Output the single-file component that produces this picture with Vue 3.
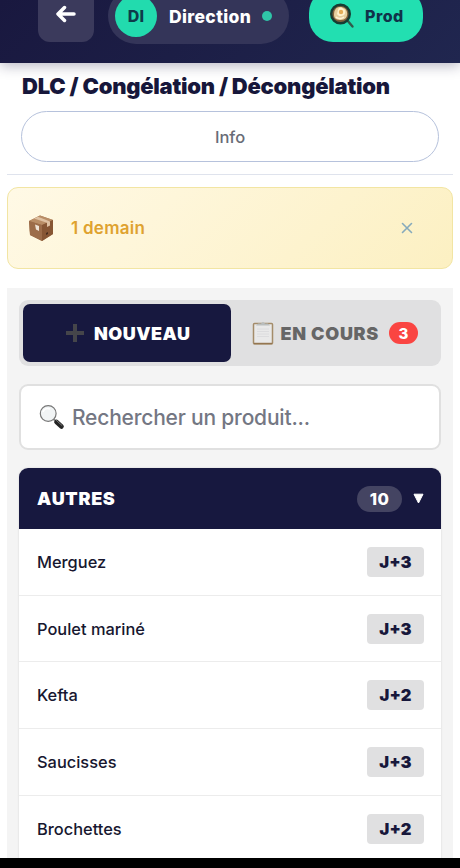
<script setup>
const products = [
  { name: 'Merguez', delay: 'J+3' },
  { name: 'Poulet mariné', delay: 'J+3' },
  { name: 'Kefta', delay: 'J+2' },
  { name: 'Saucisses', delay: 'J+3' },
  { name: 'Brochettes', delay: 'J+2' },
]
</script>

<template>
  <div class="screen">
    <header class="topbar">
      <button class="back" aria-label="Retour">
        <svg width="20" height="18" viewBox="0 0 20 18"><path d="M18 9H2.500M8.500 2.500 2 9l6.500 6.500" fill="none" stroke="#fff" stroke-width="3.500" stroke-linecap="round" stroke-linejoin="round" /></svg>
      </button>
      <div class="user">
        <span class="avatar">DI</span>
        <span class="user-name">Direction</span>
        <i class="dot"></i>
      </div>
      <button class="prod">
        <svg width="26" height="26" viewBox="0 0 26 26">
          <path d="m18 17 5.500 6.500" stroke="#315b4b" stroke-width="2.400" stroke-linecap="round" />
          <circle cx="11.500" cy="11" r="9.300" fill="#80603c" stroke="#173c33" stroke-width="2.400" />
          <path d="M5 12c0-4 1-7 5-8 4 0 7 1 8 5 1 5-2 8-6 8s-7-1-7-5z" fill="#e7cf9e" />
          <path d="M9 7c1-3 4-3 5-1 3 0 3 4 1 6-3 2-6 1-7-1z" fill="#fff2ce" />
          <circle cx="12" cy="9" r="2.200" fill="#e5ad58" />
          <path d="M7 14c2 2 6 2 8 0" stroke="#fff4d8" stroke-width="1.500" fill="none" />
        </svg>
        <span>Prod</span>
      </button>
    </header>

    <section class="heading">
      <h1>DLC / Congélation / Décongélation</h1>
      <button class="info">Info</button>
    </section>

    <div class="alert">
      <svg width="26" height="28" viewBox="0 0 26 28">
        <path d="M1 7 12 1.500 25 6v14l-11 7L2 21z" fill="#a17350" />
        <path d="m1 7 11-5.500L25 6 14 11z" fill="#b98d66" />
        <path d="m1 7 13 4v16L2 21z" fill="#9c6c49" />
        <path d="m25 6-11 5v16l11-7z" fill="#875634" />
        <path d="m6 4.500 13 4.300V13l3-1.400V7.500L10 2.700z" fill="#dfc1a2" />
        <path d="m7 10.500 4 1.500v5l-3-1.500z" fill="#eee2d5" />
        <path d="m18 19 2-1v2l-2 1z" fill="#482c1d" />
      </svg>
      <span class="alert-text">1 demain</span>
      <button class="close" aria-label="Fermer">
        <svg width="12" height="12" viewBox="0 0 12 12"><path d="m1.500 1.500 9 9m0-9-9 9" stroke="#86aabc" stroke-width="1.600" stroke-linecap="round" /></svg>
      </button>
    </div>

    <main class="panel">
      <nav class="tabs">
        <button class="tab active">
          <svg width="18" height="18" viewBox="0 0 18 18"><path d="M9 0v18M0 9h18" stroke="#45454a" stroke-width="4" /></svg>
          <span>NOUVEAU</span>
        </button>
        <button class="tab">
          <svg width="22" height="24" viewBox="0 0 22 24">
            <rect x="1.500" y="2.500" width="19" height="20.500" rx="1" fill="#e9e9e9" stroke="#a48c6a" stroke-width="1.500" />
            <path d="M5 8h12M5 10.500h12M5 13h12M5 15.500h12" stroke="#d8d8da" stroke-width=".8" />
            <path d="M4 4.500 6 2.500h3L11 .8l2 1.700h3l2 2z" fill="#b9bdbd" />
            <path d="M2 22.300h18" stroke="#8c6b43" stroke-width="1" />
          </svg>
          <span>EN COURS</span>
          <b class="badge">3</b>
        </button>
      </nav>

      <div class="search">
        <svg width="26" height="26" viewBox="0 0 26 26">
          <path d="m14.500 15 3 3" stroke="#888" stroke-width="2" />
          <path d="m17.500 18 5 4.500" stroke="#252525" stroke-width="4.600" stroke-linecap="round" />
          <path d="m17.500 16.500 5.500 5" stroke="#777" stroke-width="1" stroke-linecap="round" />
          <circle cx="9.200" cy="9.500" r="7.900" fill="#f1f4f5" stroke="#777" stroke-width="1.200" />
          <path d="M4 8c1-3 4-4 7-3" stroke="#fff" stroke-width="1.600" fill="none" />
        </svg>
        <span>Rechercher un produit...</span>
      </div>

      <section class="card">
        <div class="card-head">
          <h2>AUTRES</h2>
          <span class="count">10</span>
          <svg width="11" height="11" viewBox="0 0 11 11"><path d="M1 1.200h9L5.500 10z" fill="#fff" stroke="#fff" stroke-linejoin="round" /></svg>
        </div>
        <ul>
          <li v-for="p in products" :key="p.name">
            <span>{{ p.name }}</span>
            <b class="delay">{{ p.delay }}</b>
          </li>
        </ul>
      </section>
    </main>
    <footer class="system-bar"></footer>
  </div>
</template>

<style>
body { margin: 0; background: #fff; }
</style>

<style scoped>
* { box-sizing: border-box; }
.screen {
  display: flex; flex-direction: column;
  width: 460px; height: 868px; overflow: hidden;
  font-family: Inter, "Liberation Sans", sans-serif;
  color: #17173b; background: #fff;
}
button { font: inherit; color: inherit; border: 0; padding: 0; background: none; }
h1, h2, ul { margin: 0; padding: 0; }
svg { display: block; flex: none; }
span { white-space: nowrap; }

.topbar {
  display: flex; align-items: flex-end; flex: none;
  height: 63px; padding: 0 37px 21px 38px;
  background: linear-gradient(135deg, #19183f, #20264f);
  box-shadow: 0 3px 12px rgba(25, 24, 63, .3);
}
.back {
  display: flex; justify-content: center; align-items: center;
  width: 56px; height: 57px; border-radius: 12px; background: #3b3a5c;
}
.user {
  display: flex; align-items: center;
  width: 181px; height: 56px; margin: 0 20px -2px 14px; padding-left: 7px;
  border-radius: 28px; background: #343559;
}
.avatar {
  display: flex; justify-content: center; align-items: center; flex: none;
  width: 42px; height: 42px; border-radius: 50%;
  background: #22dbae; color: #0e3b4a; font-size: 16px; font-weight: 800; letter-spacing: .3px;
}
.user-name { width: 83px; margin-left: 12px; color: #fff; font-size: 17.500px; font-weight: 800; letter-spacing: .35px; }
.dot { width: 10px; height: 10px; margin-left: 10px; border-radius: 50%; background: #2fc5a8; }
.prod {
  display: flex; align-items: center;
  width: 114px; height: 53px; padding-left: 20px; border-radius: 24px;
  background: #22dfb1; color: #10334a; font-size: 16px; font-weight: 800; letter-spacing: .5px;
}
.prod span { margin-left: 10px; }

.heading { flex: none; height: 112px; margin: 0 7px; padding: 9px 14px 0; border-bottom: 1px solid #dfe3ed; }
h1 { height: 28px; font-size: 22px; line-height: 28px; font-weight: 900; letter-spacing: -.25px; white-space: nowrap; padding-left: 1px; }
.info {
  display: block; width: 418px; height: 51px; margin-top: 11px;
  border: 1px solid #b6c2dc; border-radius: 26px;
  color: #686b76; font-size: 16.500px; font-weight: 500;
}

.alert {
  display: flex; align-items: center; flex: none;
  height: 82px; margin: 12px 7px 19px; padding: 0 39px 0 20px;
  border: 1px solid #f2e5a3; border-radius: 11px;
  background: linear-gradient(135deg, #fff9e6, #fcf0c2);
}
.alert-text { flex: 1; margin-left: 17px; color: #dfa22f; font-size: 17px; font-weight: 600; letter-spacing: .25px; }

.panel { flex: 1; min-height: 0; overflow: hidden; margin: 0 7px; padding: 12px 12px 0; background: #f4f4f4; }
.tabs { display: flex; height: 66px; padding: 4px; border-radius: 9px; background: #e0e0e1; }
.tab {
  display: flex; align-items: center; justify-content: center;
  flex: 1; height: 58px; border-radius: 7px;
  color: #666; font-size: 18px; font-weight: 900; letter-spacing: .7px;
}
.tab.active { padding-left: 3px; background: #17183f; color: #fff; letter-spacing: .5px; }
.tab.active span { margin-left: 10px; }
.tab span { margin-left: 7px; }
.badge {
  display: flex; align-items: center; justify-content: center;
  width: 29px; height: 22px; margin-left: 10px; border-radius: 11px;
  background: #fa4542; color: #fff; font-size: 15px; font-weight: 800; letter-spacing: 0;
}
.tab:last-child { padding-left: 2px; }
.search {
  display: flex; align-items: center;
  height: 66px; margin: 18px 0; padding-left: 18px;
  border: 2px solid #e0e0e0; border-radius: 9px; background: #fff;
  color: #747783; font-size: 21px; font-weight: 500; letter-spacing: -.2px;
}
.search span { margin-left: 7px; }
.card { overflow: hidden; border-radius: 9px 9px 0 0; background: #fff; box-shadow: 0 0 2px rgba(0, 0, 0, .15); }
.card-head {
  display: flex; align-items: center;
  height: 61px; padding: 0 17px 0 18px; background: #17183f; color: #fff;
}
h2 { flex: 1; font-size: 18px; font-weight: 900; letter-spacing: .7px; }
.count {
  display: flex; justify-content: center; align-items: center;
  width: 45px; height: 26px; margin-right: 11px; border-radius: 13px;
  background: #444462; font-size: 16.500px; font-weight: 800; letter-spacing: .5px;
}
ul { list-style: none; }
li {
  display: flex; align-items: center; justify-content: space-between;
  height: 66.700px; padding: 0 17px 0 18px; border-bottom: 1px solid #ececec;
  font-size: 16.400px; font-weight: 500; color: #17172f;
}
.delay {
  display: flex; align-items: center; justify-content: center;
  width: 57px; height: 30px; border-radius: 4px;
  background: #e0e0e1; color: #17173b; font-size: 16.500px; font-weight: 900;
}
.system-bar { flex: none; height: 10px; background: #000; }
</style>
